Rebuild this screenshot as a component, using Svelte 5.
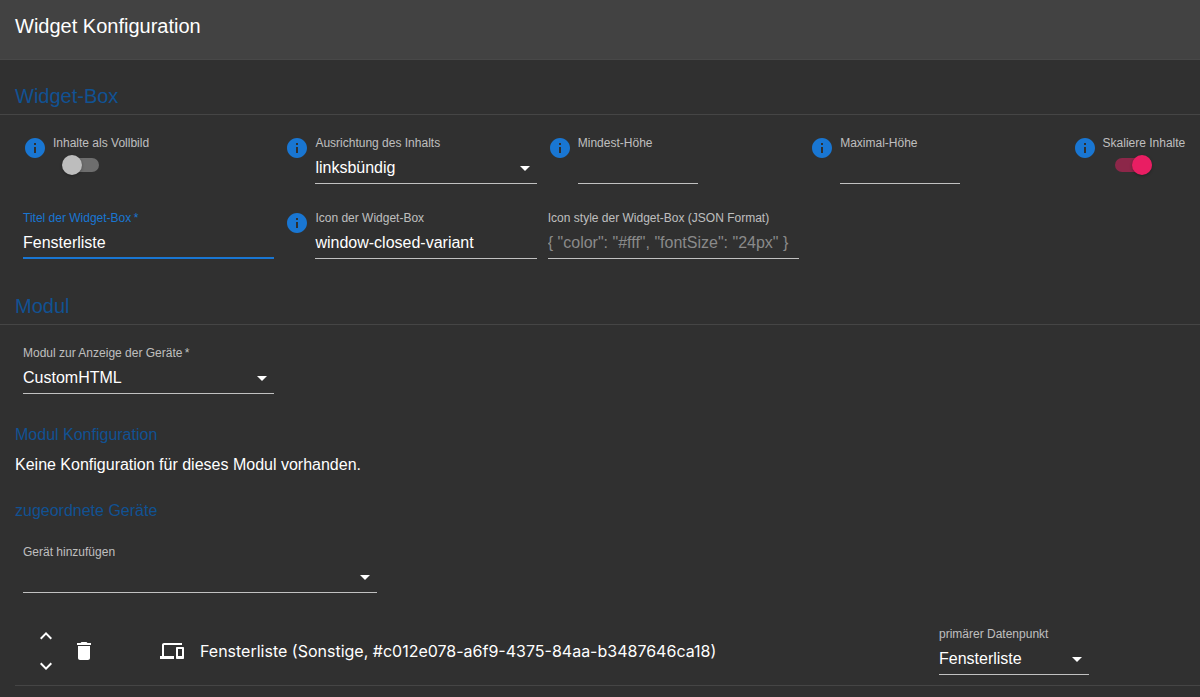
<script>
  let fullscreen = $state(false);
  let scaled = $state(true);
  let align = $state('linksbündig');
  let minHeight = $state('');
  let maxHeight = $state('');
  let title = $state('Fensterliste');
  let icon = $state('window-closed-variant');
  let iconStyle = $state('');
  let module = $state('CustomHTML');
  let device = $state('');
  let datapoint = $state('Fensterliste');
</script>

{#snippet info()}
  <svg class="icon info" viewBox="0 0 24 24" aria-hidden="true">
    <path d="M12 2C6.480 2 2 6.480 2 12s4.480 10 10 10 10-4.480 10-10S17.520 2 12 2zm1 15h-2v-6h2v6zm0-8h-2V7h2v2z" />
  </svg>
{/snippet}

{#snippet arrow()}
  <svg class="icon arrow" viewBox="0 0 24 24" aria-hidden="true"><path d="M7 10l5 5 5-5z" /></svg>
{/snippet}

<header><h1>Widget Konfiguration</h1></header>

<main>
  <h2>Widget-Box</h2>
  <div class="grid">
    <div class="cell">
      {@render info()}
      <div class="field">
        <label for="fullscreen">Inhalte als Vollbild</label>
        <input id="fullscreen" class="switch" type="checkbox" role="switch" bind:checked={fullscreen} />
      </div>
    </div>
    <div class="cell">
      {@render info()}
      <div class="field">
        <label for="align">Ausrichtung des Inhalts</label>
        <div class="select">
          <select id="align" bind:value={align}><option>linksbündig</option></select>
          {@render arrow()}
        </div>
      </div>
    </div>
    <div class="cell">
      {@render info()}
      <div class="field short">
        <label for="min">Mindest-Höhe</label>
        <input id="min" class="text" type="text" bind:value={minHeight} />
      </div>
    </div>
    <div class="cell">
      {@render info()}
      <div class="field short">
        <label for="max">Maximal-Höhe</label>
        <input id="max" class="text" type="text" bind:value={maxHeight} />
      </div>
    </div>
    <div class="cell">
      {@render info()}
      <div class="field">
        <label for="scale">Skaliere Inhalte</label>
        <input id="scale" class="switch" type="checkbox" role="switch" bind:checked={scaled} />
      </div>
    </div>

    <div class="cell">
      <div class="field active">
        <label for="title">Titel der Widget-Box&#8201;*</label>
        <input id="title" class="text" type="text" required bind:value={title} />
      </div>
    </div>
    <div class="cell">
      {@render info()}
      <div class="field">
        <label for="icon">Icon der Widget-Box</label>
        <input id="icon" class="text" type="text" bind:value={icon} />
      </div>
    </div>
    <div class="cell">
      <div class="field">
        <label for="style">Icon style der Widget-Box (JSON Format)</label>
        <input id="style" class="text" type="text" placeholder={'{ "color": "#fff", "fontSize": "24px" }'} bind:value={iconStyle} />
      </div>
    </div>
  </div>

  <h2>Modul</h2>
  <div class="grid">
    <div class="cell">
      <div class="field">
        <label for="module">Modul zur Anzeige der Geräte&#8201;*</label>
        <div class="select">
          <select id="module" required bind:value={module}><option>CustomHTML</option></select>
          {@render arrow()}
        </div>
      </div>
    </div>
  </div>

  <h3>Modul Konfiguration</h3>
  <p>Keine Konfiguration für dieses Modul vorhanden.</p>

  <h3>zugeordnete Geräte</h3>
  <div class="add">
    <div class="field">
      <label for="device">Gerät hinzufügen</label>
      <div class="select">
        <select id="device" bind:value={device}><option value=""></option></select>
        {@render arrow()}
      </div>
    </div>
  </div>

  <ul>
    <li>
      <div class="order">
        <button type="button" aria-label="Nach oben">
          <svg class="icon" viewBox="0 0 24 24"><path d="M7.410 15.410L12 10.830l4.590 4.580L18 14l-6-6-6 6z" /></svg>
        </button>
        <button type="button" aria-label="Nach unten">
          <svg class="icon" viewBox="0 0 24 24"><path d="M7.410 8.590L12 13.170l4.590-4.580L18 10l-6 6-6-6 1.410-1.410z" /></svg>
        </button>
      </div>
      <button class="delete" type="button" aria-label="Löschen">
        <svg class="icon" viewBox="0 0 24 24"><path d="M6 19c0 1.100.9 2 2 2h8c1.100 0 2-.9 2-2V7H6v12zM19 4h-3.500l-1-1h-5l-1 1H5v2h14V4z" /></svg>
      </button>
      <svg class="icon devices" viewBox="0 0 24 24" aria-hidden="true">
        <path d="M4 6h18V4H4c-1.100 0-2 .9-2 2v11H0v3h14v-3H4V6zm19 2h-6c-.550 0-1 .450-1 1v10c0 .550.450 1 1 1h6c.550 0 1-.450 1-1V9c0-.550-.450-1-1-1zm-1 9h-4v-7h4v7z" />
      </svg>
      <span class="name">Fensterliste (Sonstige, #c012e078-a6f9-4375-84aa-b3487646ca18)</span>
      <div class="field primary">
        <label for="datapoint">primärer Datenpunkt</label>
        <div class="select">
          <select id="datapoint" bind:value={datapoint}><option>Fensterliste</option></select>
          {@render arrow()}
        </div>
      </div>
    </li>
  </ul>
</main>

<style>
  :global(body) {
    margin: 0;
    background: #303030;
    color: #fff;
    font: 16px/24px "Liberation Sans", Arial, sans-serif;
  }
  h1, h2, h3, p, ul { margin: 0; padding: 0; font-weight: 400; }
  header {
    background: #424242;
    padding: 10px 15px 17px;
    border-bottom: 1px solid #484848;
  }
  h1 { font-size: 20px; line-height: 32px; }
  h2 {
    font-size: 20px;
    line-height: 32px;
    color: #115293;
    padding: 20px 15px 2px;
    border-bottom: 1px solid #454545;
  }
  h3 { font-size: 16px; line-height: 24px; color: #115293; padding: 0 15px; }
  p { padding: 6px 15px 22px; }

  .grid {
    display: grid;
    grid-template-columns: repeat(4, minmax(0, 31fr)) minmax(0, 16fr);
    row-gap: 27px;
    padding: 21px 0 11px 15px;
  }
  .cell { display: flex; gap: 6px; padding: 0 3px 0 8px; }
  .grid + h3 { margin-top: 18px; }
  .icon { display: block; flex: none; width: 24px; height: 24px; fill: #fff; }
  .info { fill: #1976d2; }

  .field { flex: 1; min-width: 0; }
  .short { flex: 0 1 120px; }
  label {
    display: block;
    margin-bottom: 2px;
    font-size: 12px;
    line-height: 14px;
    white-space: nowrap;
    color: rgba(255, 255, 255, 0.7);
  }
  .text, select {
    display: block;
    box-sizing: border-box;
    width: 100%;
    height: 32px;
    margin: 0;
    padding: 0;
    border: 0;
    border-bottom: 1px solid rgba(255, 255, 255, 0.7);
    border-radius: 0;
    outline: 0;
    background: transparent;
    color: #fff;
    font: inherit;
    appearance: none;
  }
  .text::placeholder { color: #8a8a8a; opacity: 1; }
  option { background: #424242; }
  .active label { color: #1976d2; }
  .active .text { padding-top: 1px; border-bottom: 2px solid #1976d2; }
  .select { display: grid; align-items: center; }
  .select > * { grid-area: 1 / 1; }
  .arrow { justify-self: end; pointer-events: none; }

  .switch {
    appearance: none;
    display: grid;
    align-items: center;
    width: 34px;
    height: 20px;
    margin: 5px 12px 0;
    cursor: pointer;
  }
  .switch::before, .switch::after { content: ""; grid-area: 1 / 1; }
  .switch::before { height: 14px; border-radius: 7px; background: #6e6e6e; }
  .switch::after {
    width: 20px;
    height: 20px;
    margin-left: -3px;
    border-radius: 50%;
    background: #bdbdbd;
    box-shadow: 0 1px 3px rgba(0, 0, 0, 0.3);
  }
  .switch:checked::before { background: #8c2749; }
  .switch:checked::after { margin-left: 17px; background: #e91e63; }

  .add { display: flex; box-sizing: border-box; width: 31.4%; padding: 22px 0 0 23px; }

  ul { list-style: none; padding-left: 15px; }
  li {
    display: flex;
    align-items: center;
    margin-top: 31px;
    padding: 0 111px 7px 19px;
    border-bottom: 1px solid #454545;
  }
  button { padding: 0; border: 0; background: none; cursor: pointer; }
  .order { display: grid; gap: 6px; }
  .delete { margin-left: 14px; }
  .devices { margin-left: 64px; }
  .name {
    flex: 1;
    margin-left: 16px;
    font-family: Inter, sans-serif;
  }
  .primary { flex: none; width: 150px; }
</style>
